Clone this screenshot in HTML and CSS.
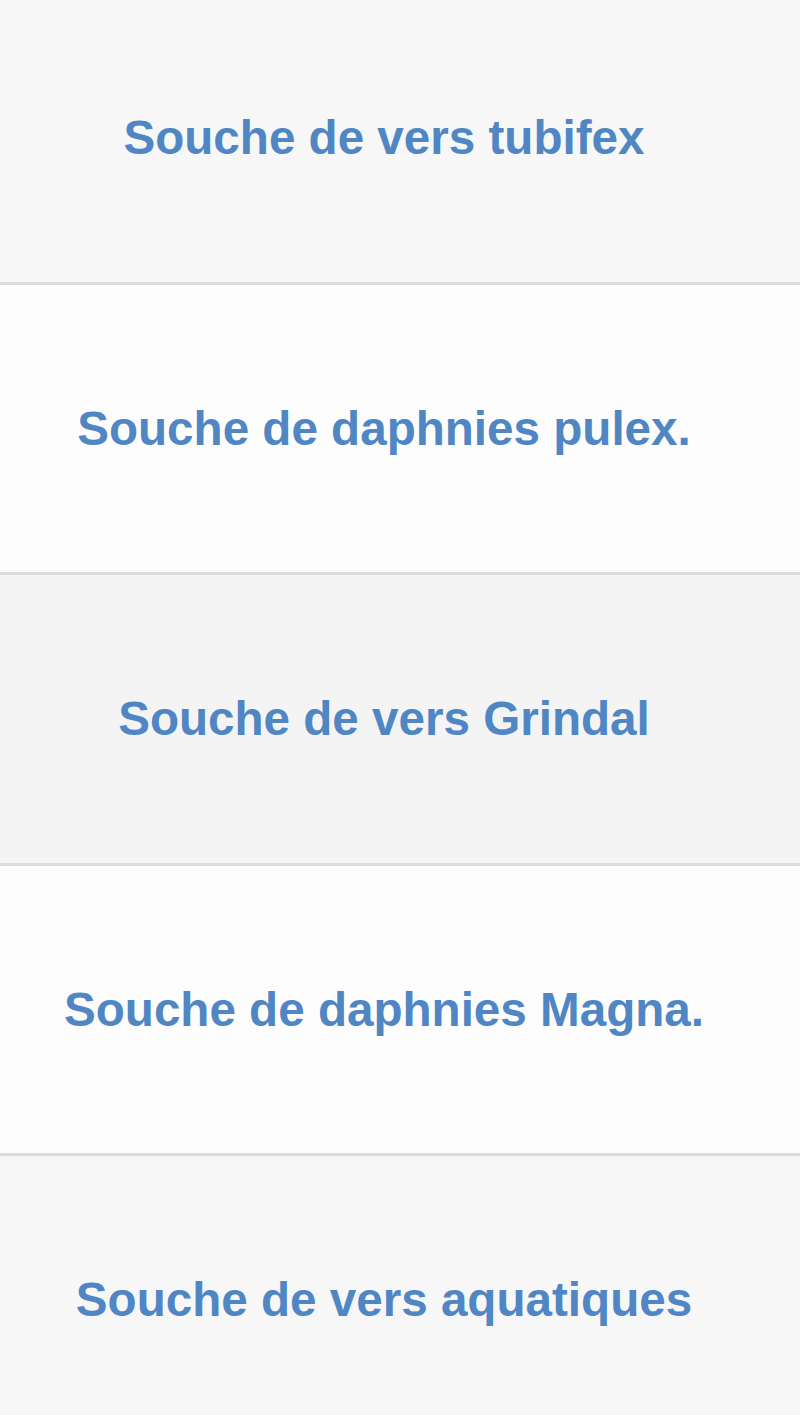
FILE: index.html
```html
<!DOCTYPE html>
<html lang="fr">
<head>
    <meta charset="UTF-8">
    <meta name="viewport" content="width=device-width, initial-scale=1.0">
    <title>Souches</title>
    <link rel="stylesheet" href="styles.css">
</head>
<body>
    <ul class="list">
        <li class="item item-grey"><a href="#">Souche de vers tubifex</a></li>
        <li class="item"><a href="#">Souche de daphnies pulex.</a></li>
        <li class="item item-dark"><a href="#">Souche de vers Grindal</a></li>
        <li class="item"><a href="#">Souche de daphnies Magna.</a></li>
        <li class="item item-grey"><a href="#">Souche de vers aquatiques</a></li>
    </ul>
</body>
</html>
```

FILE: styles.css
```css
body {
    font-family: "Liberation Sans", Arial, sans-serif;
    margin: 0;
    padding: 0;
    background-color: #f7f7f7;
    overflow: hidden;
}

.list {
    list-style: none;
    margin: -6px 0 0 0;
    padding: 0;
}

.item {
    height: 287.5px;
    border-bottom: 3px solid #dcdcdc;
    background-color: #fdfdfd;
    display: flex;
    align-items: center;
    justify-content: center;
    padding-right: 32px;
}

.item-grey {
    background-color: #f7f7f7;
}

.item-dark {
    background-color: #f4f4f4;
}

.item a {
    color: #4f86c3;
    font-weight: bold;
    font-size: 47.6px;
    text-decoration: none;
}
```
